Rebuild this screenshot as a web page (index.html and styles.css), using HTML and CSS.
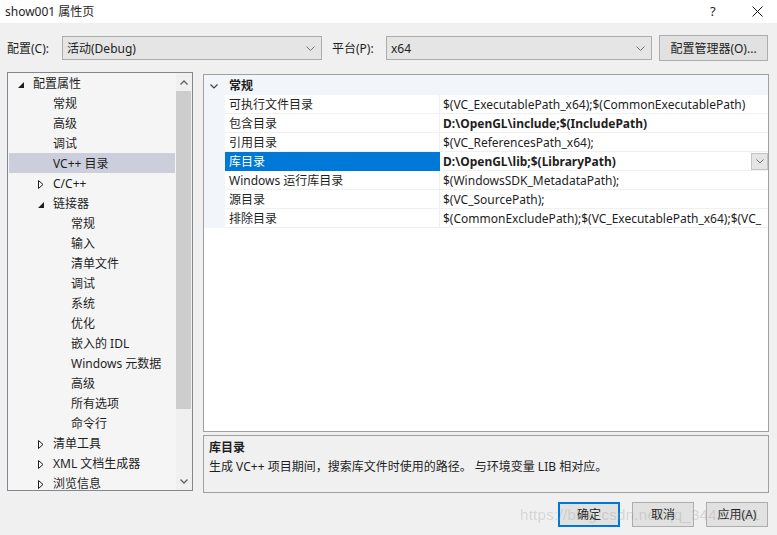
FILE: index.html
```html
<!DOCTYPE html>
<html lang="zh-CN">
<head>
  <meta charset="UTF-8" />
  <title>show001 属性页</title>
  <link rel="stylesheet" href="styles.css">
</head>
<body>
  <div class="window">
    <header class="titlebar">
      <span class="title">show001 属性页</span>
      <span class="help">?</span>
      <span class="close">
        <svg width="11" height="11" viewBox="0 0 11 11"><path d="M0.5 0.5 L10.5 10.5 M10.5 0.5 L0.5 10.5" stroke="#1a1a1a" stroke-width="1" fill="none"/></svg>
      </span>
    </header>

    <div class="toolbar">
      <span class="lbl lbl-config">配置(C):</span>
      <div class="combo combo-config">
        <span>活动(Debug)</span>
        <svg class="chev" width="9" height="5" viewBox="0 0 9 5"><path d="M0.5 0.5 L4.5 4.5 L8.5 0.5" stroke="#707070" fill="none"/></svg>
      </div>
      <span class="lbl lbl-platform">平台(P):</span>
      <div class="combo combo-platform">
        <span>x64</span>
        <svg class="chev" width="9" height="5" viewBox="0 0 9 5"><path d="M0.5 0.5 L4.5 4.5 L8.5 0.5" stroke="#707070" fill="none"/></svg>
      </div>
      <button class="btn btn-manager">配置管理器(O)...</button>
    </div>

    <div class="main">
      <div class="tree-panel">
        <ul class="tree">
          <li class="lv0"><span class="arr"><svg width="6" height="6" viewBox="0 0 6 6"><path d="M6 0 L6 6 L0 6 Z" fill="#1e1e1e"/></svg></span>配置属性</li>
          <li class="lv1"><span class="arr"></span>常规</li>
          <li class="lv1"><span class="arr"></span>高级</li>
          <li class="lv1"><span class="arr"></span>调试</li>
          <li class="lv1 sel"><span class="arr"></span>VC++ 目录</li>
          <li class="lv1"><span class="arr"><svg class="closed" width="6" height="9" viewBox="0 0 6 9"><path d="M0.5 0.5 L5 4.5 L0.5 8.5 Z" fill="none" stroke="#1e1e1e"/></svg></span>C/C++</li>
          <li class="lv1"><span class="arr"><svg width="6" height="6" viewBox="0 0 6 6"><path d="M6 0 L6 6 L0 6 Z" fill="#1e1e1e"/></svg></span>链接器</li>
          <li class="lv2"><span class="arr"></span>常规</li>
          <li class="lv2"><span class="arr"></span>输入</li>
          <li class="lv2"><span class="arr"></span>清单文件</li>
          <li class="lv2"><span class="arr"></span>调试</li>
          <li class="lv2"><span class="arr"></span>系统</li>
          <li class="lv2"><span class="arr"></span>优化</li>
          <li class="lv2"><span class="arr"></span>嵌入的 IDL</li>
          <li class="lv2"><span class="arr"></span>Windows 元数据</li>
          <li class="lv2"><span class="arr"></span>高级</li>
          <li class="lv2"><span class="arr"></span>所有选项</li>
          <li class="lv2"><span class="arr"></span>命令行</li>
          <li class="lv1"><span class="arr"><svg class="closed" width="6" height="9" viewBox="0 0 6 9"><path d="M0.5 0.5 L5 4.5 L0.5 8.5 Z" fill="none" stroke="#1e1e1e"/></svg></span>清单工具</li>
          <li class="lv1"><span class="arr"><svg class="closed" width="6" height="9" viewBox="0 0 6 9"><path d="M0.5 0.5 L5 4.5 L0.5 8.5 Z" fill="none" stroke="#1e1e1e"/></svg></span>XML 文档生成器</li>
          <li class="lv1"><span class="arr"><svg class="closed" width="6" height="9" viewBox="0 0 6 9"><path d="M0.5 0.5 L5 4.5 L0.5 8.5 Z" fill="none" stroke="#1e1e1e"/></svg></span>浏览信息</li>
        </ul>
        <div class="scrollbar">
          <div class="sb-btn"><svg width="8" height="5" viewBox="0 0 8 5"><path d="M0.5 4.5 L4 1 L7.5 4.5" stroke="#606060" stroke-width="1.3" fill="none"/></svg></div>
          <div class="sb-thumb"></div>
          <div class="sb-track"></div>
          <div class="sb-btn"><svg width="8" height="5" viewBox="0 0 8 5"><path d="M0.5 0.5 L4 4 L7.5 0.5" stroke="#606060" stroke-width="1.3" fill="none"/></svg></div>
        </div>
      </div>

      <div class="right">
        <div class="grid">
          <div class="cat">
            <span class="cat-chev"><svg width="8" height="5" viewBox="0 0 8 5"><path d="M0.5 0.5 L4 4 L7.5 0.5" stroke="#404040" stroke-width="1.2" fill="none"/></svg></span>
            <span class="cat-name">常规</span>
          </div>
          <div class="row"><span class="gut"></span><span class="name">可执行文件目录</span><span class="val">$(VC_ExecutablePath_x64);$(CommonExecutablePath)</span></div>
          <div class="row"><span class="gut"></span><span class="name">包含目录</span><span class="val bold">D:\OpenGL\include;$(IncludePath)</span></div>
          <div class="row"><span class="gut"></span><span class="name">引用目录</span><span class="val">$(VC_ReferencesPath_x64);</span></div>
          <div class="row active"><span class="gut"></span><span class="name">库目录</span><span class="val bold"><span class="txt">D:\OpenGL\lib;$(LibraryPath)</span><span class="drop"><svg width="8" height="5" viewBox="0 0 8 5"><path d="M0.5 0.5 L4 4 L7.5 0.5" stroke="#707070" fill="none"/></svg></span></span></div>
          <div class="row"><span class="gut"></span><span class="name">Windows 运行库目录</span><span class="val">$(WindowsSDK_MetadataPath);</span></div>
          <div class="row"><span class="gut"></span><span class="name">源目录</span><span class="val">$(VC_SourcePath);</span></div>
          <div class="row"><span class="gut"></span><span class="name">排除目录</span><span class="val clip">$(CommonExcludePath);$(VC_ExecutablePath_x64);$(VC_</span></div>
        </div>
        <div class="desc">
          <div class="desc-title">库目录</div>
          <div class="desc-text">生成 VC++ 项目期间，搜索库文件时使用的路径。 与环境变量 LIB 相对应。</div>
        </div>
      </div>
    </div>

    <div class="footer">
      <button class="btn btn-ok">确定</button>
      <button class="btn">取消</button>
      <button class="btn">应用(A)</button>
    </div>

    <div class="watermark">https://blog.csdn.net/qq_34420081</div>
  </div>
</body>
</html>
```

FILE: styles.css
```css
* { margin: 0; padding: 0; box-sizing: border-box; }
html, body { width: 777px; height: 535px; overflow: hidden; }
body { background: #f0f0f0; color: #1e1e1e; font-family: "Noto Sans", "Noto Sans CJK SC", sans-serif; font-size: 12px; line-height: 1; }
.window { position: relative; width: 777px; height: 535px; display: flex; flex-direction: column; }

/* title bar */
.titlebar { height: 23px; background: #fff; display: flex; align-items: center; padding-left: 5px; }
.title { flex: 1; }
.help { width: 42px; text-align: left; font-size: 13px; }
.close { width: 25px; display: flex; align-items: center; }

/* toolbar */
.toolbar { display: flex; align-items: center; height: 26px; margin-top: 12px; padding-left: 7px; }
.lbl { white-space: nowrap; padding-top: 1px; }
.lbl-config { width: 55px; }
.lbl-platform { width: 54px; margin-left: 10px; }
.combo { height: 24px; background: #e5e5e5; border: 1px solid #adadad; display: flex; align-items: center; padding: 1px 6px 0 4px; }
.combo span { flex: 1; }
.combo-config { width: 260px; }
.combo-platform { width: 266px; }
.btn { font: inherit; color: #1e1e1e; background: #e1e1e1; border: 1px solid #adadad; height: 25px; padding-top: 1px; }
.btn-manager { width: 109px; height: 26px; margin-left: 7px; }

/* main area */
.main { display: flex; margin-top: 11px; height: 421px; padding-left: 7px; }
.tree-panel { width: 186px; height: 419px; border: 1px solid #828790; background: #f5f5f5; display: flex; overflow: hidden; }
.tree { list-style: none; flex: 1; padding: 0 1px; }
.tree li { height: 20px; display: flex; align-items: center; white-space: nowrap; padding-top: 2px; }
.tree li.sel { background: #cccedb; }
.tree .lv0 { padding-left: 9px; }
.tree .lv1 { padding-left: 29px; }
.tree .lv2 { padding-left: 47px; }
.arr { width: 15px; height: 18px; display: flex; align-items: center; padding-top: 1px; }
.arr svg.closed { margin-top: -1px; }
.scrollbar { width: 16px; display: flex; flex-direction: column; background: #f0f0f0; }
.sb-btn { height: 18px; display: flex; align-items: center; justify-content: center; }
.sb-thumb { height: 318px; background: #cdcdcd; margin-right: 1px; }
.sb-track { flex: 1; }

.right { width: 566px; margin-left: 10px; padding-top: 2px; display: flex; flex-direction: column; }
.grid { height: 358px; background: #fff; border: 1px solid #a0a0a0; overflow: hidden; }
.cat { height: 20px; background: #f2f5fa; display: flex; align-items: center; padding-top: 2px; }
.cat-chev { width: 25px; padding-left: 6px; display: flex; }
.cat-name { font-weight: bold; }
.row { height: 19px; display: flex; }
.gut { width: 21px; background: #f2f5fa; }
.name { width: 215px; padding: 1px 0 0 4px; border-bottom: 1px solid #f0f0f0; border-right: 1px solid #f0f0f0; display: flex; align-items: center; white-space: nowrap; }
.val { flex: 1; padding: 1px 0 0 3px; border-bottom: 1px solid #f0f0f0; display: flex; align-items: center; white-space: nowrap; overflow: hidden; }
.val.bold { font-weight: bold; }
.row.active .name { background: #0078d7; color: #fff; border-color: #0078d7; }
.val .txt { flex: 1; }
.drop { width: 17px; height: 17px; margin-top: -1px; background: #e5e5e5; border: 1px solid #c4c4c4; display: flex; align-items: center; justify-content: center; }

.desc { height: 58px; margin-top: 3px; border: 1px solid #a0a0a0; background: #f0f0f0; padding: 2px 5px; }
.desc-title { font-weight: bold; height: 19px; display: flex; align-items: center; }
.desc-text { height: 19px; display: flex; align-items: center; }

/* footer buttons */
.footer { display: flex; justify-content: flex-end; gap: 12px; margin-top: 9px; padding-right: 9px; }
.footer .btn { width: 62px; }
.btn-ok { border: 2px solid #0078d7; }

.watermark { position: absolute; left: 520px; top: 507px; font-family: "Liberation Sans", sans-serif; font-size: 15px; letter-spacing: 0.3px; color: rgba(150, 150, 150, 0.3); white-space: nowrap; pointer-events: none; }
```
